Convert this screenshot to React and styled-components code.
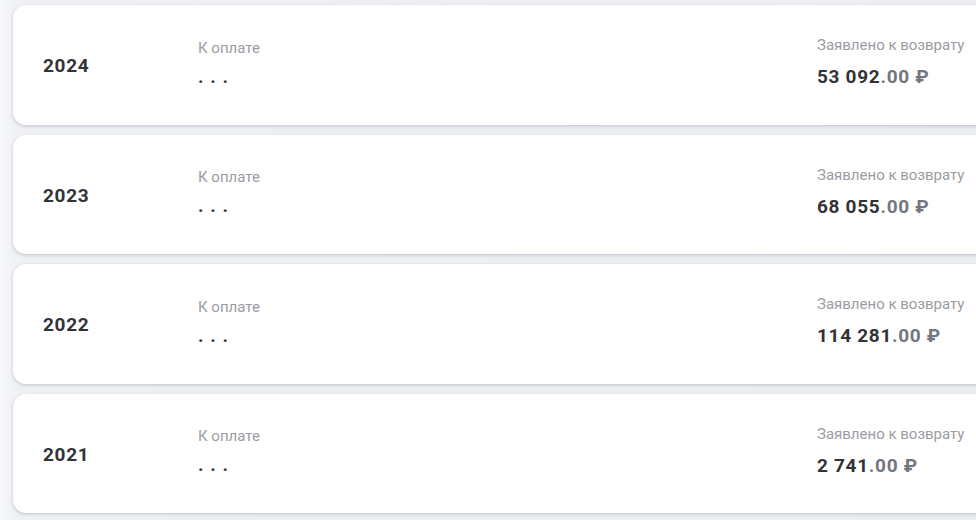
import React from "react";
import styled, { createGlobalStyle } from "styled-components";

const Global = createGlobalStyle`
  html, body { margin: 0; padding: 0; }
  body {
    background: linear-gradient(90deg, #f8f9fb 0px, #eff1f4 14px, #eceef2 100%);
    font-family: Roboto, "Noto Sans", "Liberation Sans", sans-serif;
    overflow: hidden;
    width: 976px;
    height: 520px;
  }
`;

const List = styled.div`
  display: flex;
  flex-direction: column;
  gap: 10px;
  padding: 5px 0 0 13px;
  margin-right: -30px;
`;

const Card = styled.div`
  height: 119.5px;
  box-sizing: border-box;
  background: #fff;
  border-radius: 13px;
  box-shadow: 0 1px 3px rgba(40, 44, 60, 0.18), 0 2px 6px rgba(40, 44, 60, 0.05);
  display: grid;
  grid-template-columns: 155px 1fr 189px;
  align-items: center;
  padding: 0 0 0 30px;
`;

const Year = styled.div`
  font-size: 19px;
  font-weight: 700;
  letter-spacing: 0.7px;
  color: #323337;
  padding-top: 2px;
`;

const Field = styled.div`
  display: flex;
  flex-direction: column;
  gap: ${(p) => (p.$loading ? "11px" : "12px")};
  margin-top: ${(p) => (p.$loading ? "-4px" : "-4px")};
`;

const Label = styled.div`
  font-size: 15px;
  color: #9b9ca3;
  line-height: 17px;
`;

const Dots = styled.div`
  font-size: 19px;
  font-weight: 700;
  color: #323337;
  letter-spacing: 6.8px;
  line-height: 18px;
`;

const Amount = styled.div`
  font-size: 19px;
  font-weight: 700;
  color: #323337;
  letter-spacing: 0.7px;
  line-height: 22px;
`;

const Cents = styled.span`
  color: #74767e;
`;

const rows = [
  { year: "2024", amount: "53 092" },
  { year: "2023", amount: "68 055" },
  { year: "2022", amount: "114 281" },
  { year: "2021", amount: "2 741" },
];

export default function App() {
  return (
    <>
      <Global />
      <List>
        {rows.map((r) => (
          <Card key={r.year}>
            <Year>{r.year}</Year>
            <Field $loading>
              <Label>К оплате</Label>
              <Dots>...</Dots>
            </Field>
            <Field>
              <Label>Заявлено к возврату</Label>
              <Amount>
                {r.amount}
                <Cents>.00 ₽</Cents>
              </Amount>
            </Field>
          </Card>
        ))}
      </List>
    </>
  );
}
